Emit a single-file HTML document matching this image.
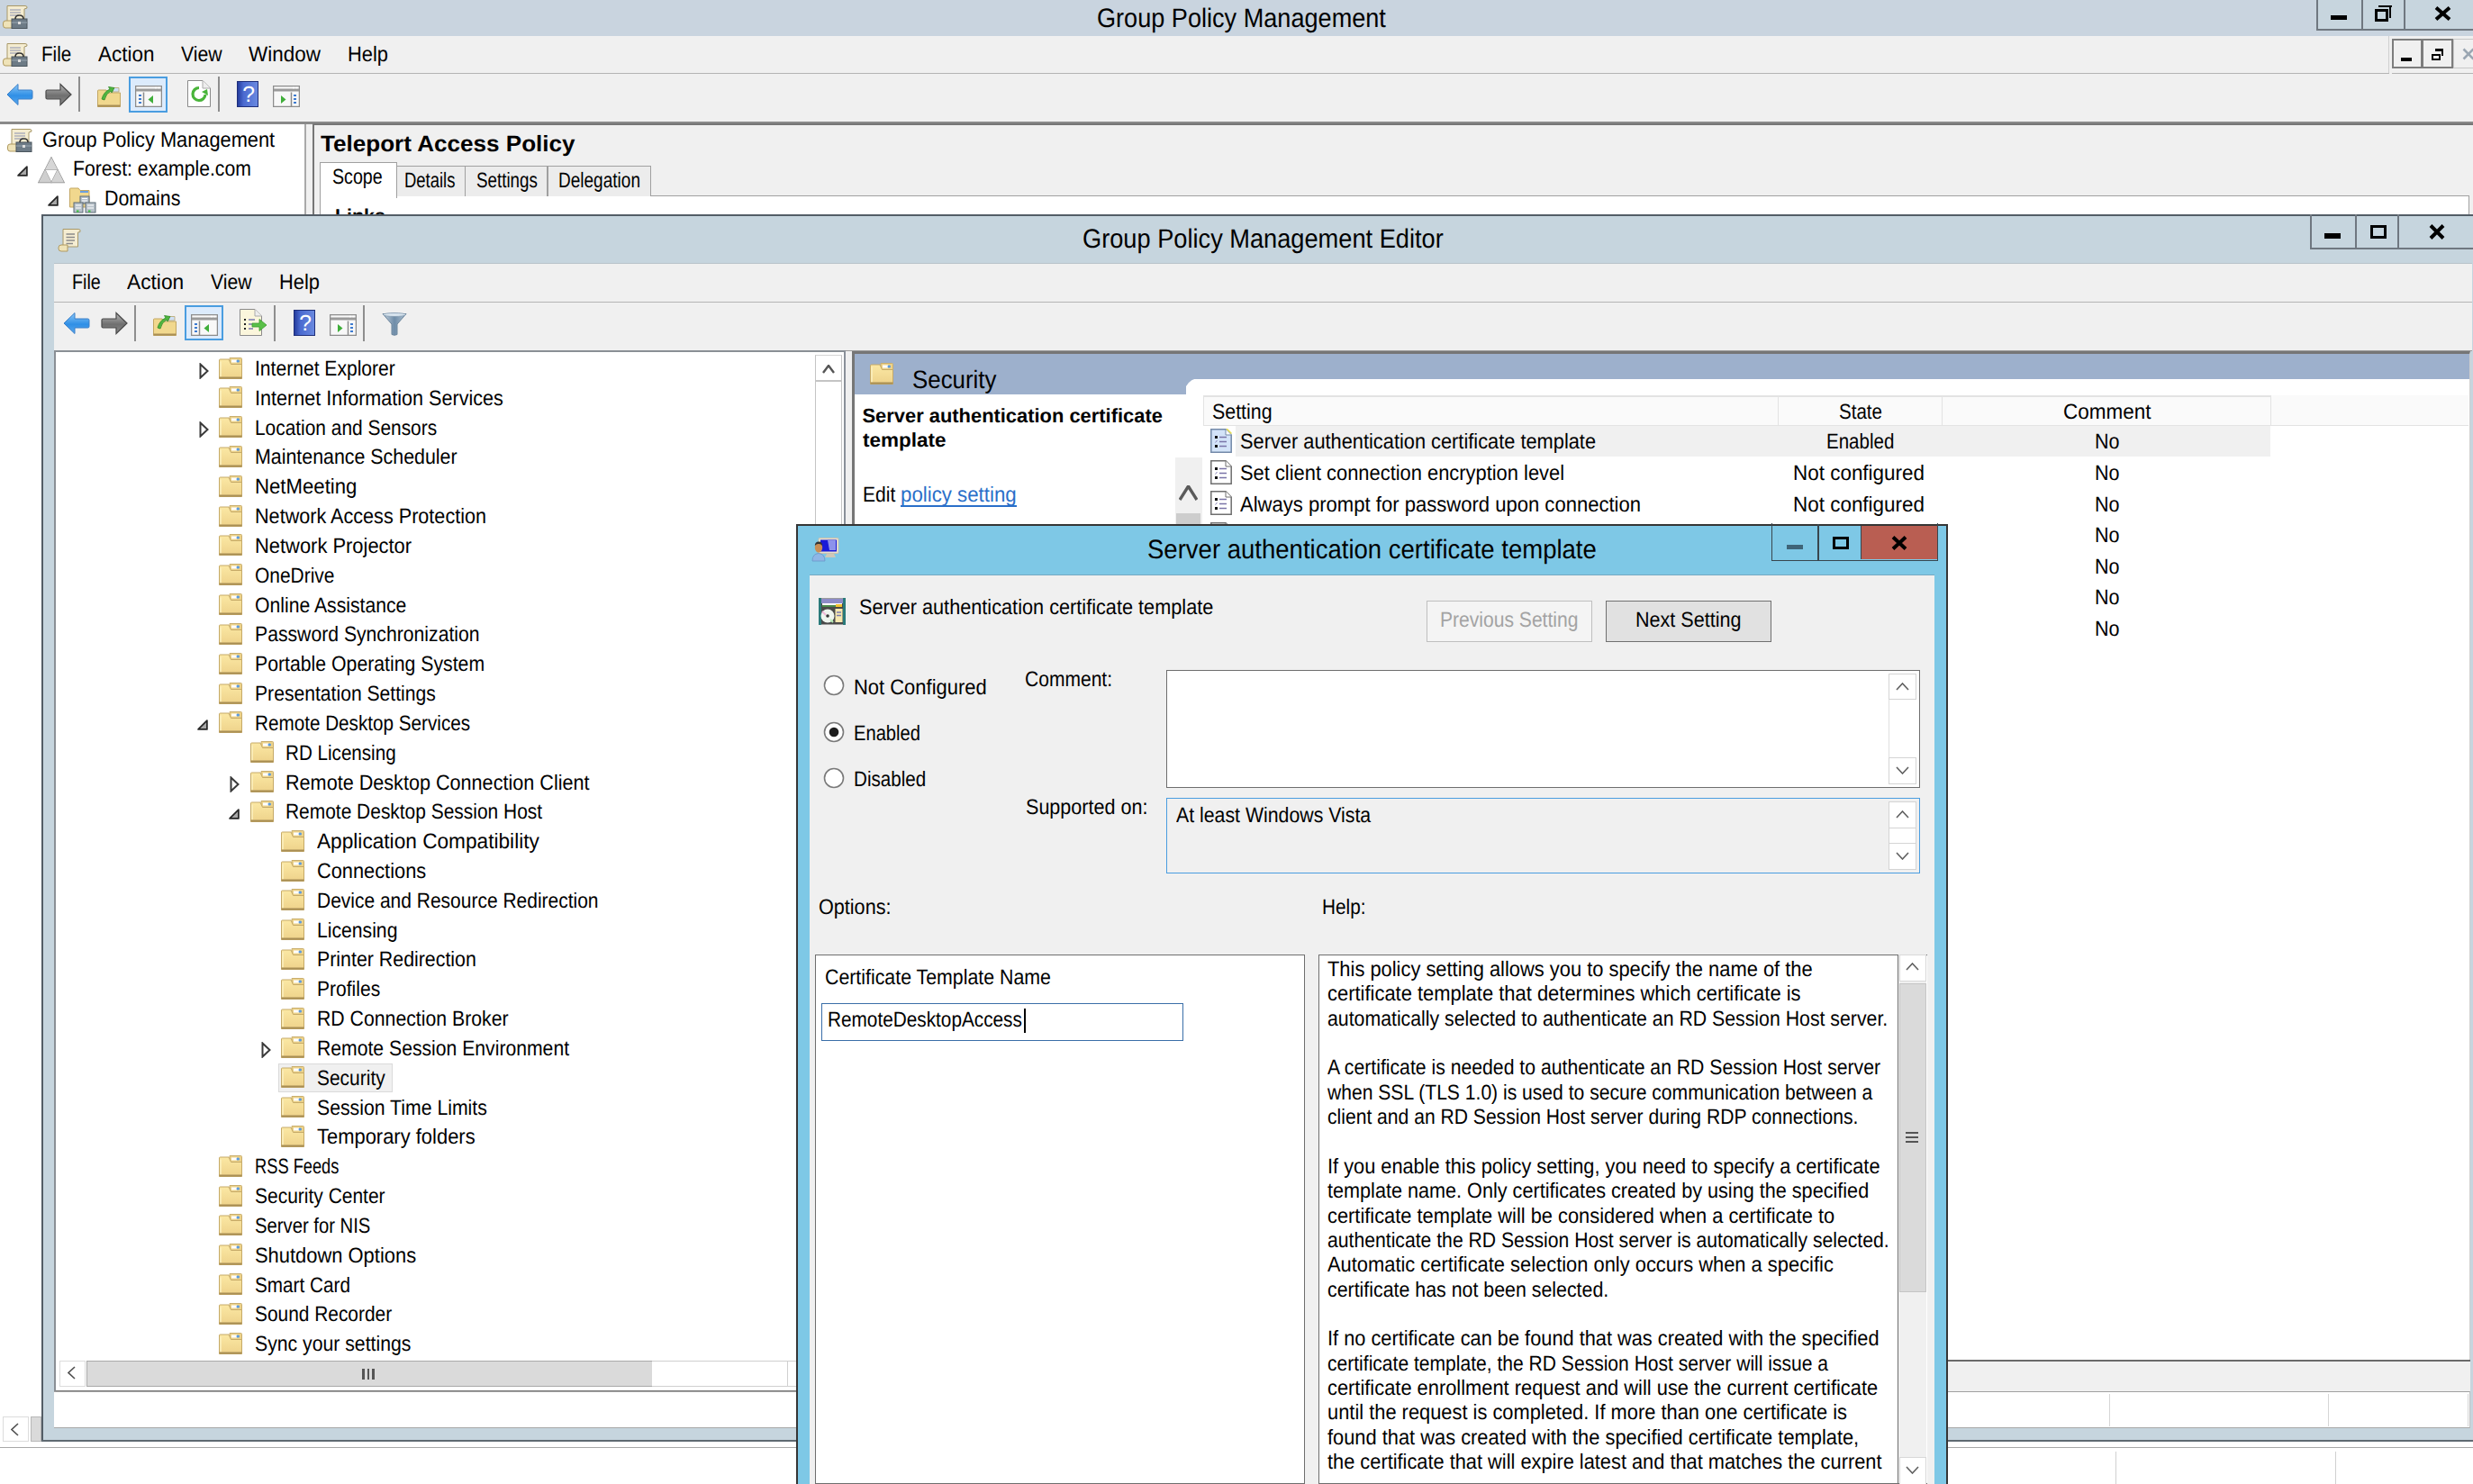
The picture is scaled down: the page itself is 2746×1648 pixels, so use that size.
<!DOCTYPE html><html><head><meta charset="utf-8"><style>
*{margin:0;padding:0;box-sizing:border-box}
html,body{width:2746px;height:1648px;overflow:hidden;background:#f0f0f0}
body{position:relative;font-family:"Liberation Sans",sans-serif;color:#000;text-rendering:geometricPrecision}
body>div,body>svg{position:absolute}
.t{white-space:pre;line-height:1}
</style></head><body>
<svg style="left:0;top:0" width="0" height="0"><defs><linearGradient id="fgrad" x1="0" y1="0" x2="0" y2="1"><stop offset="0" stop-color="#fbe8a4"/><stop offset="1" stop-color="#eed28a"/></linearGradient></defs></svg>
<div style="left:0px;top:0px;width:2746px;height:40px;background:#c9d4df"></div>
<svg style="left:2px;top:5px" width="30" height="28" viewBox="0 0 30 28"><path d="M6 1.5H26Q28.5 1.5 28 4L25 5V20H6Z" fill="#f4ecd0" stroke="#a89868"/><path d="M9 6H21M9 9H21M9 12H19" stroke="#8a8fb0" stroke-width="1.2"/><path d="M1.5 21Q1.5 18 4 18H12V26H4Q1.5 26 1.5 23Z" fill="#efe3b8" stroke="#b09a60"/><rect x="11" y="16" width="17" height="10.5" fill="#6d7b86" stroke="#4a555d"/><path d="M15 16Q15 12 19.5 12Q24 12 24 16" fill="none" stroke="#333" stroke-width="1.6"/><path d="M11 20H28" stroke="#9aa8b2" stroke-width="1"/><rect x="18" y="19" width="3" height="3" fill="#ddd"/></svg>
<div class="t" style="top:6px;font-size:29.620px;transform:scaleX(0.9154);left:1218.00px;transform-origin:0 0;">Group Policy Management</div>
<div style="left:2572px;top:-2px;width:176px;height:36px;background:#c7d5de;border:2px solid #6f7780;border-top:none"></div>
<div style="left:2622px;top:0px;width:2px;height:34px;background:#6f7780"></div>
<div style="left:2669px;top:0px;width:2px;height:34px;background:#6f7780"></div>
<div style="left:2588px;top:16.5px;width:18px;height:5.5px;background:#000"></div>
<div style="left:2637px;top:9.5px;width:15px;height:14.5px;border:3.6px solid #000"></div>
<div style="left:2641px;top:5.5px;width:14.5px;height:2.8px;background:#000"></div>
<div style="left:2652.5px;top:5.5px;width:2.8px;height:14.5px;background:#000"></div>
<svg style="left:2703px;top:7px" width="19" height="16" viewBox="0 0 19 16"><path d="M2 1.5L17 14.5M17 1.5L2 14.5" stroke="#000" stroke-width="4"/></svg>
<div style="left:0px;top:40px;width:2746px;height:41px;background:#f0f0f0"></div>
<div style="left:0px;top:80.5px;width:2653px;height:1.5px;background:#b4b4b4"></div>
<div style="left:2656px;top:80.5px;width:90px;height:1.5px;background:#b4b4b4"></div>
<div style="left:2652px;top:40px;width:1px;height:41px;background:#cfcfcf"></div>
<svg style="left:2px;top:47px" width="30" height="28" viewBox="0 0 30 28"><path d="M6 1.5H26Q28.5 1.5 28 4L25 5V20H6Z" fill="#f4ecd0" stroke="#a89868"/><path d="M9 6H21M9 9H21M9 12H19" stroke="#8a8fb0" stroke-width="1.2"/><path d="M1.5 21Q1.5 18 4 18H12V26H4Q1.5 26 1.5 23Z" fill="#efe3b8" stroke="#b09a60"/><rect x="11" y="16" width="17" height="10.5" fill="#6d7b86" stroke="#4a555d"/><path d="M15 16Q15 12 19.5 12Q24 12 24 16" fill="none" stroke="#333" stroke-width="1.6"/><path d="M11 20H28" stroke="#9aa8b2" stroke-width="1"/><rect x="18" y="19" width="3" height="3" fill="#ddd"/></svg>
<div class="t" style="top:50px;font-size:23.653px;transform:scaleX(0.8726);left:46.25px;transform-origin:0 0;">File</div>
<div class="t" style="top:50px;font-size:23.653px;transform:scaleX(0.9508);left:108.75px;transform-origin:0 0;">Action</div>
<div class="t" style="top:50px;font-size:23.653px;transform:scaleX(0.8988);left:201.25px;transform-origin:0 0;">View</div>
<div class="t" style="top:50px;font-size:23.653px;transform:scaleX(0.9503);left:276.25px;transform-origin:0 0;">Window</div>
<div class="t" style="top:50px;font-size:23.653px;transform:scaleX(0.9249);left:386.25px;transform-origin:0 0;">Help</div>
<div style="left:2656px;top:43px;width:34px;height:33px;background:#f0f0f0;border:2px solid #7d7d7d"></div>
<div style="left:2689px;top:43px;width:35px;height:33px;background:#f0f0f0;border:2px solid #7d7d7d"></div>
<div style="left:2724px;top:43px;width:30px;height:33px;background:#f0f0f0;border:1.5px solid #c8c8c8"></div>
<div style="left:2666px;top:64px;width:11.5px;height:3.5px;background:#000"></div>
<div style="left:2700px;top:59.5px;width:10px;height:7.5px;border:2.5px solid #000"></div>
<div style="left:2703.5px;top:54px;width:9.5px;height:2.5px;background:#000"></div>
<div style="left:2710.5px;top:54px;width:2.5px;height:8px;background:#000"></div>
<svg style="left:2734px;top:53px" width="14" height="14" viewBox="0 0 14 14"><path d="M1.5 1.5L12.5 12.5M12.5 1.5L1.5 12.5" stroke="#9aa6b2" stroke-width="2.6"/></svg>
<div style="left:0px;top:82px;width:2746px;height:54px;background:#f0f0f0"></div>
<svg style="left:7px;top:92px" width="30" height="26" viewBox="0 0 30 26"><defs><linearGradient id="ba" x1="0" y1="0" x2="0" y2="1"><stop offset="0" stop-color="#8cc8f7"/><stop offset=".55" stop-color="#2f8fe6"/><stop offset="1" stop-color="#5aa9ee"/></linearGradient></defs><path d="M1 13L13 1.5V8H27.5Q29 8 29 9.5V16.5Q29 18 27.5 18H13V24.5Z" fill="url(#ba)" stroke="#3a7fc8" stroke-width="1"/></svg>
<svg style="left:49.5px;top:92px" width="30" height="26" viewBox="0 0 30 26"><defs><linearGradient id="fa" x1="0" y1="0" x2="0" y2="1"><stop offset="0" stop-color="#b9b9b9"/><stop offset=".55" stop-color="#6f6f6f"/><stop offset="1" stop-color="#8a8a8a"/></linearGradient></defs><path d="M29 13L17 1.5V8H2.5Q1 8 1 9.5V16.5Q1 18 2.5 18H17V24.5Z" fill="url(#fa)" stroke="#4a4a4a" stroke-width="1.2"/></svg>
<div style="left:86.5px;top:85px;width:2px;height:39px;background:#8e8e8e"></div>
<svg style="left:108px;top:92.5px" width="26" height="26" viewBox="0 0 26 26"><path d="M.5 8Q.5 7 1.5 7H10L12 10H25.5V25.5H.5Z" fill="#f1d88e" stroke="#c3a763"/><path d="M.5 24.5H25.5" stroke="#a98f55" stroke-width="2"/><path d="M17 4.5H24V9H17Z" fill="#cfe0f5" stroke="#b9a36a" stroke-width=".8"/><path d="M5 17Q7 9 14 6L12.5 3.5L19 4.5L16 10L15 8Q9.5 11 8 18Z" fill="#4fb53f" stroke="#2e8a26" stroke-width=".8"/></svg>
<div style="left:143px;top:85px;width:42.5px;height:39.5px;background:#dcebfc;border:2px solid #4a9de0"></div>
<svg style="left:150px;top:95px" width="30" height="24" viewBox="0 0 30 24"><rect x=".5" y=".5" width="29" height="23" fill="#f8f8f8" stroke="#8c8c8c" stroke-width="1.5"/><path d="M1 5H29" stroke="#9a9a9a" stroke-width="3"/><path d="M22 2.5H24M25.5 2.5H27.5" stroke="#fff" stroke-width="1.5"/><path d="M9.5 7.5V23" stroke="#8c8c8c" stroke-width="1.5"/><path d="M4 11H7M4 15H7M4 19H7" stroke="#3d7bd0" stroke-width="2"/><path d="M20 11L14.5 15.5L20 20Z" fill="#3fae3a"/></svg>
<svg style="left:207.5px;top:89px" width="26" height="30" viewBox="0 0 26 30"><path d="M.5 .5H17L25.5 9V29.5H.5Z" fill="#fff" stroke="#8a8a8a"/><path d="M17 .5V9H25.5" fill="#eee" stroke="#aaa"/><path d="M13 8.5A7 7 0 1 0 20 16" fill="none" stroke="#49b43a" stroke-width="3.2"/><path d="M16 13L23 17L22 10Z" fill="#49b43a"/></svg>
<div style="left:241.5px;top:85px;width:2px;height:39px;background:#8e8e8e"></div>
<svg style="left:263px;top:89.5px" width="24" height="29" viewBox="0 0 24 29"><defs><linearGradient id="hg" x1="0" y1="0" x2="1" y2="0"><stop offset="0" stop-color="#22399a"/><stop offset=".3" stop-color="#4a6ad0"/><stop offset="1" stop-color="#6b8ae0"/></linearGradient></defs><rect x=".5" y=".5" width="23" height="28" fill="url(#hg)" stroke="#1f2f7a"/><text x="13.0" y="23.200000000000003" font-family="Liberation Sans" font-size="24.65" fill="#fff" text-anchor="middle">?</text></svg>
<svg style="left:303px;top:95px" width="30" height="24" viewBox="0 0 30 24"><rect x=".5" y=".5" width="29" height="23" fill="#f8f8f8" stroke="#8c8c8c" stroke-width="1.5"/><path d="M1 5H29" stroke="#9a9a9a" stroke-width="3"/><path d="M22 2.5H24M25.5 2.5H27.5" stroke="#fff" stroke-width="1.5"/><path d="M20.5 7.5V23" stroke="#8c8c8c" stroke-width="1.5"/><path d="M23 11H26M23 15H26M23 19H26" stroke="#3d7bd0" stroke-width="2"/><path d="M9 11L14.5 15.5L9 20Z" fill="#3fae3a"/></svg>
<div style="left:0px;top:135px;width:2746px;height:3px;background:#8a8a8a"></div>
<div style="left:0px;top:138px;width:338px;height:1463px;background:#fff"></div>
<div style="left:338px;top:138px;width:1.5px;height:100px;background:#a9a9a9"></div>
<svg style="left:7px;top:142px" width="30" height="28" viewBox="0 0 30 28"><path d="M6 1.5H26Q28.5 1.5 28 4L25 5V20H6Z" fill="#f4ecd0" stroke="#a89868"/><path d="M9 6H21M9 9H21M9 12H19" stroke="#8a8fb0" stroke-width="1.2"/><path d="M1.5 21Q1.5 18 4 18H12V26H4Q1.5 26 1.5 23Z" fill="#efe3b8" stroke="#b09a60"/><rect x="11" y="16" width="17" height="10.5" fill="#6d7b86" stroke="#4a555d"/><path d="M15 16Q15 12 19.5 12Q24 12 24 16" fill="none" stroke="#333" stroke-width="1.6"/><path d="M11 20H28" stroke="#9aa8b2" stroke-width="1"/><rect x="18" y="19" width="3" height="3" fill="#ddd"/></svg>
<div class="t" style="top:145px;font-size:23.653px;transform:scaleX(0.9224);left:46.70px;transform-origin:0 0;">Group Policy Management</div>
<svg style="left:18.5px;top:183.5px" width="12" height="12" viewBox="0 0 12 12"><path d="M10.9 1.1V10.9H1.1Z" fill="#a8a8a8" stroke="#262626" stroke-width="1.7" stroke-linejoin="round"/></svg>
<svg style="left:42px;top:173.5px" width="30" height="30" viewBox="0 0 30 30"><path d="M15 1L29 28.5H1Z" fill="#f4f4f4" stroke="#8a8a8a" stroke-width="1.3"/><path d="M8 14.5H22L15 28.5Z" fill="#fff" stroke="#9a9a9a" stroke-width="1.1"/><path d="M15 1L22 14.5H8Z" fill="#d6d6d6"/><path d="M1 28.5L8 14.5L15 28.5Z" fill="#cfcfcf"/><path d="M15 28.5L22 14.5L29 28.5Z" fill="#d4d4d4"/></svg>
<div class="t" style="top:177px;font-size:23.653px;transform:scaleX(0.8966);left:81.00px;transform-origin:0 0;">Forest: example.com</div>
<svg style="left:53.0px;top:217.0px" width="12" height="12" viewBox="0 0 12 12"><path d="M10.9 1.1V10.9H1.1Z" fill="#a8a8a8" stroke="#262626" stroke-width="1.7" stroke-linejoin="round"/></svg>
<svg style="left:77px;top:208px" width="30" height="29" viewBox="0 0 30 29"><path d="M.5 2Q.5 1 1.5 1H10L12 3.5H22V22H.5Z" fill="#f1d88e" stroke="#c3a763"/><rect x="12" y="4" width="9" height="2" fill="#6a9fe0"/><rect x="12" y="10" width="10" height="8" fill="#b8c2ca" stroke="#5d6a74"/><rect x="5" y="17" width="10" height="11" fill="#b8c2ca" stroke="#5d6a74"/><rect x="18" y="17" width="11" height="11" fill="#b8c2ca" stroke="#5d6a74"/><path d="M7 20H13M7 23H13M20 20H27M20 23H27M14 12.5H20M14 15H20" stroke="#fff" stroke-width="1.2"/><rect x="8" y="25.5" width="2.5" height="2" fill="#3cc43c"/><rect x="21" y="25.5" width="2.5" height="2" fill="#3cc43c"/></svg>
<div class="t" style="top:210px;font-size:23.653px;transform:scaleX(0.9053);left:116.20px;transform-origin:0 0;">Domains</div>
<div style="left:339.5px;top:138px;width:7px;height:100px;background:#f0f0f0"></div>
<div style="left:346.5px;top:136.5px;width:2399.5px;height:102px;background:#f0f0f0;border-left:2.5px solid #767676;border-top:2.5px solid #767676"></div>
<div class="t" style="top:148px;font-size:25.000px;font-weight:bold;transform:scaleX(1.0430);left:356.00px;transform-origin:0 0;">Teleport Access Policy</div>
<div style="left:355px;top:217px;width:2387px;height:30px;background:#fff;border:1.5px solid #a0a0a0"></div>
<div style="left:440px;top:183.5px;width:76.5px;height:34.5px;background:#ececec;border:1.5px solid #a0a0a0;border-bottom:none"></div>
<div style="left:516px;top:183.5px;width:92px;height:34.5px;background:#ececec;border:1.5px solid #a0a0a0;border-bottom:none"></div>
<div style="left:607.5px;top:183.5px;width:115.5px;height:34.5px;background:#ececec;border:1.5px solid #a0a0a0;border-bottom:none"></div>
<div style="left:355px;top:179.5px;width:85.5px;height:40px;background:#fff;border:1.5px solid #a0a0a0;border-bottom:none"></div>
<div class="t" style="top:186px;font-size:23.653px;transform:scaleX(0.8306);left:369.00px;transform-origin:0 0;">Scope</div>
<div class="t" style="top:190px;font-size:23.653px;transform:scaleX(0.7814);left:448.50px;transform-origin:0 0;">Details</div>
<div class="t" style="top:190px;font-size:23.653px;transform:scaleX(0.7945);left:528.60px;transform-origin:0 0;">Settings</div>
<div class="t" style="top:190px;font-size:23.653px;transform:scaleX(0.8047);left:620.00px;transform-origin:0 0;">Delegation</div>
<div class="t" style="top:230px;font-size:21.400px;font-weight:bold;left:372.00px;transform-origin:0 0;">Links</div>
<div style="left:0px;top:1601px;width:2746px;height:47px;background:#fff"></div>
<div style="left:0px;top:1606.5px;width:2746px;height:1.5px;background:#a8a8a8"></div>
<div style="left:2349px;top:1612px;width:1px;height:36px;background:#d0d0d0"></div>
<div style="left:2592.5px;top:1612px;width:1px;height:36px;background:#d0d0d0"></div>
<div style="left:0px;top:1571px;width:46px;height:31px;background:#fff"></div>
<div style="left:2.5px;top:1573px;width:29px;height:28px;background:#fff;border:1px solid #dcdcdc"></div>
<svg style="left:12px;top:1580px" width="9" height="15" viewBox="0 0 9 15"><path d="M8 1L1 7.5L8 14" fill="none" stroke="#505050" stroke-width="1.6"/></svg>
<div style="left:34px;top:1573px;width:12px;height:28px;background:#dadada;border:1px solid #b8b8b8"></div>
<div style="left:46px;top:238px;width:2704px;height:1363px;background:#c6d5de;border:2px solid #535d66"></div>
<svg style="left:63px;top:252px" width="28" height="28" viewBox="0 0 28 28"><path d="M7 2.5H24Q27 2.5 26 5.5L23.5 6V22H7Z" fill="#f5edd2" stroke="#a89868"/><path d="M10.5 8H20M10.5 11.5H20M10.5 15H20M10.5 18.5H18" stroke="#8a8a8a" stroke-width="1.3"/><path d="M2 23Q2 20 5 20H12V27H5Q2 27 2 24Z" fill="#efe3b8" stroke="#b09a60"/></svg>
<div class="t" style="top:251px;font-size:29.620px;transform:scaleX(0.9188);left:1202.30px;transform-origin:0 0;">Group Policy Management Editor</div>
<div style="left:2565px;top:238px;width:185px;height:39px;border:2px solid #6f7780;border-top:none"></div>
<div style="left:2615px;top:238px;width:2px;height:38px;background:#6f7780"></div>
<div style="left:2662px;top:238px;width:2px;height:38px;background:#6f7780"></div>
<div style="left:2580.5px;top:258.5px;width:18px;height:6px;background:#000"></div>
<div style="left:2631.5px;top:250px;width:18.5px;height:14.5px;border:3.8px solid #000"></div>
<svg style="left:2696.5px;top:249px" width="18" height="17" viewBox="0 0 18 17"><path d="M2 1.5L16 15.5M16 1.5L2 15.5" stroke="#000" stroke-width="4"/></svg>
<div style="left:60px;top:292px;width:2684.5px;height:43px;background:#f0f0f0;border-top:1.5px solid #b9c3ca"></div>
<div class="t" style="top:303px;font-size:23.653px;transform:scaleX(0.8332);left:79.50px;transform-origin:0 0;">File</div>
<div class="t" style="top:303px;font-size:23.653px;transform:scaleX(0.9622);left:141.25px;transform-origin:0 0;">Action</div>
<div class="t" style="top:303px;font-size:23.653px;transform:scaleX(0.8988);left:233.75px;transform-origin:0 0;">View</div>
<div class="t" style="top:303px;font-size:23.653px;transform:scaleX(0.9249);left:309.50px;transform-origin:0 0;">Help</div>
<div style="left:60px;top:334.5px;width:2684.5px;height:1.5px;background:#b4b4b4"></div>
<div style="left:60px;top:336px;width:2684.5px;height:53px;background:#f0f0f0"></div>
<svg style="left:69.5px;top:345.5px" width="30" height="26" viewBox="0 0 30 26"><defs><linearGradient id="ba" x1="0" y1="0" x2="0" y2="1"><stop offset="0" stop-color="#8cc8f7"/><stop offset=".55" stop-color="#2f8fe6"/><stop offset="1" stop-color="#5aa9ee"/></linearGradient></defs><path d="M1 13L13 1.5V8H27.5Q29 8 29 9.5V16.5Q29 18 27.5 18H13V24.5Z" fill="url(#ba)" stroke="#3a7fc8" stroke-width="1"/></svg>
<svg style="left:111.5px;top:345.5px" width="30" height="26" viewBox="0 0 30 26"><defs><linearGradient id="fa" x1="0" y1="0" x2="0" y2="1"><stop offset="0" stop-color="#b9b9b9"/><stop offset=".55" stop-color="#6f6f6f"/><stop offset="1" stop-color="#8a8a8a"/></linearGradient></defs><path d="M29 13L17 1.5V8H2.5Q1 8 1 9.5V16.5Q1 18 2.5 18H17V24.5Z" fill="url(#fa)" stroke="#4a4a4a" stroke-width="1.2"/></svg>
<div style="left:148.5px;top:338.5px;width:2px;height:40px;background:#8e8e8e"></div>
<svg style="left:170px;top:346.5px" width="26" height="26" viewBox="0 0 26 26"><path d="M.5 8Q.5 7 1.5 7H10L12 10H25.5V25.5H.5Z" fill="#f1d88e" stroke="#c3a763"/><path d="M.5 24.5H25.5" stroke="#a98f55" stroke-width="2"/><path d="M17 4.5H24V9H17Z" fill="#cfe0f5" stroke="#b9a36a" stroke-width=".8"/><path d="M5 17Q7 9 14 6L12.5 3.5L19 4.5L16 10L15 8Q9.5 11 8 18Z" fill="#4fb53f" stroke="#2e8a26" stroke-width=".8"/></svg>
<div style="left:205px;top:338.5px;width:42.7px;height:39.5px;background:#dcebfc;border:2px solid #4a9de0"></div>
<svg style="left:211.5px;top:348.5px" width="30" height="24" viewBox="0 0 30 24"><rect x=".5" y=".5" width="29" height="23" fill="#f8f8f8" stroke="#8c8c8c" stroke-width="1.5"/><path d="M1 5H29" stroke="#9a9a9a" stroke-width="3"/><path d="M22 2.5H24M25.5 2.5H27.5" stroke="#fff" stroke-width="1.5"/><path d="M9.5 7.5V23" stroke="#8c8c8c" stroke-width="1.5"/><path d="M4 11H7M4 15H7M4 19H7" stroke="#3d7bd0" stroke-width="2"/><path d="M20 11L14.5 15.5L20 20Z" fill="#3fae3a"/></svg>
<svg style="left:266px;top:343px" width="31" height="30" viewBox="0 0 31 30"><path d="M.5 .5H17L24.5 8V29.5H.5Z" fill="#fbf6dc" stroke="#8a8a8a"/><path d="M17 .5V8H24.5" fill="#eee" stroke="#aaa"/><path d="M5 12H7M5 17H7M5 22H7" stroke="#222" stroke-width="2"/><path d="M10 12H17M10 17H15M10 22H15" stroke="#7a7ab0" stroke-width="1.6"/><path d="M14 16H22V11.5L30 18L22 24.5V20H14Z" fill="#59c048" stroke="#3a9a2e" stroke-width=".8"/></svg>
<div style="left:304.0px;top:338.5px;width:2px;height:40px;background:#8e8e8e"></div>
<svg style="left:325.5px;top:343.5px" width="24" height="29" viewBox="0 0 24 29"><defs><linearGradient id="hg" x1="0" y1="0" x2="1" y2="0"><stop offset="0" stop-color="#22399a"/><stop offset=".3" stop-color="#4a6ad0"/><stop offset="1" stop-color="#6b8ae0"/></linearGradient></defs><rect x=".5" y=".5" width="23" height="28" fill="url(#hg)" stroke="#1f2f7a"/><text x="13.0" y="23.200000000000003" font-family="Liberation Sans" font-size="24.65" fill="#fff" text-anchor="middle">?</text></svg>
<svg style="left:365.5px;top:348.5px" width="30" height="24" viewBox="0 0 30 24"><rect x=".5" y=".5" width="29" height="23" fill="#f8f8f8" stroke="#8c8c8c" stroke-width="1.5"/><path d="M1 5H29" stroke="#9a9a9a" stroke-width="3"/><path d="M22 2.5H24M25.5 2.5H27.5" stroke="#fff" stroke-width="1.5"/><path d="M20.5 7.5V23" stroke="#8c8c8c" stroke-width="1.5"/><path d="M23 11H26M23 15H26M23 19H26" stroke="#3d7bd0" stroke-width="2"/><path d="M9 11L14.5 15.5L9 20Z" fill="#3fae3a"/></svg>
<div style="left:402.5px;top:338.5px;width:2px;height:40px;background:#8e8e8e"></div>
<svg style="left:424px;top:346.5px" width="28" height="26" viewBox="0 0 28 26"><defs><linearGradient id="flg" x1="0" y1="0" x2="1" y2="0"><stop offset="0" stop-color="#c5d2de"/><stop offset=".5" stop-color="#6e8ca8"/><stop offset="1" stop-color="#b0c2d2"/></linearGradient></defs><path d="M1 1.5H27L17 13V24.5Q14 26 11 24.5V13Z" fill="url(#flg)" stroke="#6b859c" stroke-width="1"/><ellipse cx="14" cy="2.5" rx="12.5" ry="2" fill="#d8e4ee" stroke="#7d96ac" stroke-width=".8"/></svg>
<div style="left:60px;top:388.5px;width:2684.5px;height:1.5px;background:#9a9a9a"></div>
<div style="left:60px;top:389px;width:879px;height:1158px;background:#fff;border:2px solid #8a8f95;border-right:2.5px solid #8a9099;border-bottom:3px solid #7b7b7b"></div>
<svg style="left:220.5px;top:402.5px" width="11" height="18" viewBox="0 0 11 18"><path d="M1.5 1.5L9.5 9L1.5 16.5Z" fill="none" stroke="#3a3a3a" stroke-width="2" stroke-linejoin="miter"/></svg>
<svg style="left:243.0px;top:396.5px" width="26" height="24" viewBox="0 0 26 24"><path d="M12 .5H24.5Q25.5 .5 25.5 1.5V9H12Z" fill="#ecd28a" stroke="#c9ae6e"/><rect x="14" y="2.5" width="6" height="3" fill="#fff"/><rect x="19.5" y="2.5" width="3.5" height="3" rx="1.5" fill="#5b9be0"/><path d="M.5 3Q.5 2 1.5 2H11L13.5 7.5H25.5V23.5H.5Z" fill="url(#fgrad)" stroke="#c6aa68"/><path d="M2 4.5V21.5" stroke="#fbf0c0" stroke-width="1.5"/><path d="M.5 22.5H25.5" stroke="#a98f55" stroke-width="2"/></svg>
<div class="t" style="top:399px;font-size:23.653px;transform:scaleX(0.8918);left:282.80px;transform-origin:0 0;">Internet Explorer</div>
<svg style="left:243.0px;top:429.324px" width="26" height="24" viewBox="0 0 26 24"><path d="M12 .5H24.5Q25.5 .5 25.5 1.5V9H12Z" fill="#ecd28a" stroke="#c9ae6e"/><rect x="14" y="2.5" width="6" height="3" fill="#fff"/><rect x="19.5" y="2.5" width="3.5" height="3" rx="1.5" fill="#5b9be0"/><path d="M.5 3Q.5 2 1.5 2H11L13.5 7.5H25.5V23.5H.5Z" fill="url(#fgrad)" stroke="#c6aa68"/><path d="M2 4.5V21.5" stroke="#fbf0c0" stroke-width="1.5"/><path d="M.5 22.5H25.5" stroke="#a98f55" stroke-width="2"/></svg>
<div class="t" style="top:432px;font-size:23.653px;transform:scaleX(0.9126);left:282.80px;transform-origin:0 0;">Internet Information Services</div>
<svg style="left:220.5px;top:468.148px" width="11" height="18" viewBox="0 0 11 18"><path d="M1.5 1.5L9.5 9L1.5 16.5Z" fill="none" stroke="#3a3a3a" stroke-width="2" stroke-linejoin="miter"/></svg>
<svg style="left:243.0px;top:462.148px" width="26" height="24" viewBox="0 0 26 24"><path d="M12 .5H24.5Q25.5 .5 25.5 1.5V9H12Z" fill="#ecd28a" stroke="#c9ae6e"/><rect x="14" y="2.5" width="6" height="3" fill="#fff"/><rect x="19.5" y="2.5" width="3.5" height="3" rx="1.5" fill="#5b9be0"/><path d="M.5 3Q.5 2 1.5 2H11L13.5 7.5H25.5V23.5H.5Z" fill="url(#fgrad)" stroke="#c6aa68"/><path d="M2 4.5V21.5" stroke="#fbf0c0" stroke-width="1.5"/><path d="M.5 22.5H25.5" stroke="#a98f55" stroke-width="2"/></svg>
<div class="t" style="top:465px;font-size:23.653px;transform:scaleX(0.8838);left:282.80px;transform-origin:0 0;">Location and Sensors</div>
<svg style="left:243.0px;top:494.972px" width="26" height="24" viewBox="0 0 26 24"><path d="M12 .5H24.5Q25.5 .5 25.5 1.5V9H12Z" fill="#ecd28a" stroke="#c9ae6e"/><rect x="14" y="2.5" width="6" height="3" fill="#fff"/><rect x="19.5" y="2.5" width="3.5" height="3" rx="1.5" fill="#5b9be0"/><path d="M.5 3Q.5 2 1.5 2H11L13.5 7.5H25.5V23.5H.5Z" fill="url(#fgrad)" stroke="#c6aa68"/><path d="M2 4.5V21.5" stroke="#fbf0c0" stroke-width="1.5"/><path d="M.5 22.5H25.5" stroke="#a98f55" stroke-width="2"/></svg>
<div class="t" style="top:497px;font-size:23.653px;transform:scaleX(0.9041);left:282.80px;transform-origin:0 0;">Maintenance Scheduler</div>
<svg style="left:243.0px;top:527.796px" width="26" height="24" viewBox="0 0 26 24"><path d="M12 .5H24.5Q25.5 .5 25.5 1.5V9H12Z" fill="#ecd28a" stroke="#c9ae6e"/><rect x="14" y="2.5" width="6" height="3" fill="#fff"/><rect x="19.5" y="2.5" width="3.5" height="3" rx="1.5" fill="#5b9be0"/><path d="M.5 3Q.5 2 1.5 2H11L13.5 7.5H25.5V23.5H.5Z" fill="url(#fgrad)" stroke="#c6aa68"/><path d="M2 4.5V21.5" stroke="#fbf0c0" stroke-width="1.5"/><path d="M.5 22.5H25.5" stroke="#a98f55" stroke-width="2"/></svg>
<div class="t" style="top:530px;font-size:23.653px;transform:scaleX(0.9379);left:282.80px;transform-origin:0 0;">NetMeeting</div>
<svg style="left:243.0px;top:560.62px" width="26" height="24" viewBox="0 0 26 24"><path d="M12 .5H24.5Q25.5 .5 25.5 1.5V9H12Z" fill="#ecd28a" stroke="#c9ae6e"/><rect x="14" y="2.5" width="6" height="3" fill="#fff"/><rect x="19.5" y="2.5" width="3.5" height="3" rx="1.5" fill="#5b9be0"/><path d="M.5 3Q.5 2 1.5 2H11L13.5 7.5H25.5V23.5H.5Z" fill="url(#fgrad)" stroke="#c6aa68"/><path d="M2 4.5V21.5" stroke="#fbf0c0" stroke-width="1.5"/><path d="M.5 22.5H25.5" stroke="#a98f55" stroke-width="2"/></svg>
<div class="t" style="top:563px;font-size:23.653px;transform:scaleX(0.9142);left:282.80px;transform-origin:0 0;">Network Access Protection</div>
<svg style="left:243.0px;top:593.444px" width="26" height="24" viewBox="0 0 26 24"><path d="M12 .5H24.5Q25.5 .5 25.5 1.5V9H12Z" fill="#ecd28a" stroke="#c9ae6e"/><rect x="14" y="2.5" width="6" height="3" fill="#fff"/><rect x="19.5" y="2.5" width="3.5" height="3" rx="1.5" fill="#5b9be0"/><path d="M.5 3Q.5 2 1.5 2H11L13.5 7.5H25.5V23.5H.5Z" fill="url(#fgrad)" stroke="#c6aa68"/><path d="M2 4.5V21.5" stroke="#fbf0c0" stroke-width="1.5"/><path d="M.5 22.5H25.5" stroke="#a98f55" stroke-width="2"/></svg>
<div class="t" style="top:596px;font-size:23.653px;transform:scaleX(0.9267);left:282.80px;transform-origin:0 0;">Network Projector</div>
<svg style="left:243.0px;top:626.268px" width="26" height="24" viewBox="0 0 26 24"><path d="M12 .5H24.5Q25.5 .5 25.5 1.5V9H12Z" fill="#ecd28a" stroke="#c9ae6e"/><rect x="14" y="2.5" width="6" height="3" fill="#fff"/><rect x="19.5" y="2.5" width="3.5" height="3" rx="1.5" fill="#5b9be0"/><path d="M.5 3Q.5 2 1.5 2H11L13.5 7.5H25.5V23.5H.5Z" fill="url(#fgrad)" stroke="#c6aa68"/><path d="M2 4.5V21.5" stroke="#fbf0c0" stroke-width="1.5"/><path d="M.5 22.5H25.5" stroke="#a98f55" stroke-width="2"/></svg>
<div class="t" style="top:629px;font-size:23.653px;transform:scaleX(0.8853);left:282.80px;transform-origin:0 0;">OneDrive</div>
<svg style="left:243.0px;top:659.092px" width="26" height="24" viewBox="0 0 26 24"><path d="M12 .5H24.5Q25.5 .5 25.5 1.5V9H12Z" fill="#ecd28a" stroke="#c9ae6e"/><rect x="14" y="2.5" width="6" height="3" fill="#fff"/><rect x="19.5" y="2.5" width="3.5" height="3" rx="1.5" fill="#5b9be0"/><path d="M.5 3Q.5 2 1.5 2H11L13.5 7.5H25.5V23.5H.5Z" fill="url(#fgrad)" stroke="#c6aa68"/><path d="M2 4.5V21.5" stroke="#fbf0c0" stroke-width="1.5"/><path d="M.5 22.5H25.5" stroke="#a98f55" stroke-width="2"/></svg>
<div class="t" style="top:662px;font-size:23.653px;transform:scaleX(0.8959);left:282.80px;transform-origin:0 0;">Online Assistance</div>
<svg style="left:243.0px;top:691.9159999999999px" width="26" height="24" viewBox="0 0 26 24"><path d="M12 .5H24.5Q25.5 .5 25.5 1.5V9H12Z" fill="#ecd28a" stroke="#c9ae6e"/><rect x="14" y="2.5" width="6" height="3" fill="#fff"/><rect x="19.5" y="2.5" width="3.5" height="3" rx="1.5" fill="#5b9be0"/><path d="M.5 3Q.5 2 1.5 2H11L13.5 7.5H25.5V23.5H.5Z" fill="url(#fgrad)" stroke="#c6aa68"/><path d="M2 4.5V21.5" stroke="#fbf0c0" stroke-width="1.5"/><path d="M.5 22.5H25.5" stroke="#a98f55" stroke-width="2"/></svg>
<div class="t" style="top:694px;font-size:23.653px;transform:scaleX(0.8959);left:282.80px;transform-origin:0 0;">Password Synchronization</div>
<svg style="left:243.0px;top:724.74px" width="26" height="24" viewBox="0 0 26 24"><path d="M12 .5H24.5Q25.5 .5 25.5 1.5V9H12Z" fill="#ecd28a" stroke="#c9ae6e"/><rect x="14" y="2.5" width="6" height="3" fill="#fff"/><rect x="19.5" y="2.5" width="3.5" height="3" rx="1.5" fill="#5b9be0"/><path d="M.5 3Q.5 2 1.5 2H11L13.5 7.5H25.5V23.5H.5Z" fill="url(#fgrad)" stroke="#c6aa68"/><path d="M2 4.5V21.5" stroke="#fbf0c0" stroke-width="1.5"/><path d="M.5 22.5H25.5" stroke="#a98f55" stroke-width="2"/></svg>
<div class="t" style="top:727px;font-size:23.653px;transform:scaleX(0.8987);left:282.80px;transform-origin:0 0;">Portable Operating System</div>
<svg style="left:243.0px;top:757.564px" width="26" height="24" viewBox="0 0 26 24"><path d="M12 .5H24.5Q25.5 .5 25.5 1.5V9H12Z" fill="#ecd28a" stroke="#c9ae6e"/><rect x="14" y="2.5" width="6" height="3" fill="#fff"/><rect x="19.5" y="2.5" width="3.5" height="3" rx="1.5" fill="#5b9be0"/><path d="M.5 3Q.5 2 1.5 2H11L13.5 7.5H25.5V23.5H.5Z" fill="url(#fgrad)" stroke="#c6aa68"/><path d="M2 4.5V21.5" stroke="#fbf0c0" stroke-width="1.5"/><path d="M.5 22.5H25.5" stroke="#a98f55" stroke-width="2"/></svg>
<div class="t" style="top:760px;font-size:23.653px;transform:scaleX(0.8937);left:282.80px;transform-origin:0 0;">Presentation Settings</div>
<svg style="left:219.0px;top:799.3879999999999px" width="12" height="12" viewBox="0 0 12 12"><path d="M10.9 1.1V10.9H1.1Z" fill="#a8a8a8" stroke="#262626" stroke-width="1.7" stroke-linejoin="round"/></svg>
<svg style="left:243.0px;top:790.3879999999999px" width="26" height="24" viewBox="0 0 26 24"><path d="M12 .5H24.5Q25.5 .5 25.5 1.5V9H12Z" fill="#ecd28a" stroke="#c9ae6e"/><rect x="14" y="2.5" width="6" height="3" fill="#fff"/><rect x="19.5" y="2.5" width="3.5" height="3" rx="1.5" fill="#5b9be0"/><path d="M.5 3Q.5 2 1.5 2H11L13.5 7.5H25.5V23.5H.5Z" fill="url(#fgrad)" stroke="#c6aa68"/><path d="M2 4.5V21.5" stroke="#fbf0c0" stroke-width="1.5"/><path d="M.5 22.5H25.5" stroke="#a98f55" stroke-width="2"/></svg>
<div class="t" style="top:793px;font-size:23.653px;transform:scaleX(0.8748);left:282.80px;transform-origin:0 0;">Remote Desktop Services</div>
<svg style="left:277.5px;top:823.212px" width="26" height="24" viewBox="0 0 26 24"><path d="M12 .5H24.5Q25.5 .5 25.5 1.5V9H12Z" fill="#ecd28a" stroke="#c9ae6e"/><rect x="14" y="2.5" width="6" height="3" fill="#fff"/><rect x="19.5" y="2.5" width="3.5" height="3" rx="1.5" fill="#5b9be0"/><path d="M.5 3Q.5 2 1.5 2H11L13.5 7.5H25.5V23.5H.5Z" fill="url(#fgrad)" stroke="#c6aa68"/><path d="M2 4.5V21.5" stroke="#fbf0c0" stroke-width="1.5"/><path d="M.5 22.5H25.5" stroke="#a98f55" stroke-width="2"/></svg>
<div class="t" style="top:826px;font-size:23.653px;transform:scaleX(0.8723);left:317.30px;transform-origin:0 0;">RD Licensing</div>
<svg style="left:255.0px;top:862.036px" width="11" height="18" viewBox="0 0 11 18"><path d="M1.5 1.5L9.5 9L1.5 16.5Z" fill="none" stroke="#3a3a3a" stroke-width="2" stroke-linejoin="miter"/></svg>
<svg style="left:277.5px;top:856.036px" width="26" height="24" viewBox="0 0 26 24"><path d="M12 .5H24.5Q25.5 .5 25.5 1.5V9H12Z" fill="#ecd28a" stroke="#c9ae6e"/><rect x="14" y="2.5" width="6" height="3" fill="#fff"/><rect x="19.5" y="2.5" width="3.5" height="3" rx="1.5" fill="#5b9be0"/><path d="M.5 3Q.5 2 1.5 2H11L13.5 7.5H25.5V23.5H.5Z" fill="url(#fgrad)" stroke="#c6aa68"/><path d="M2 4.5V21.5" stroke="#fbf0c0" stroke-width="1.5"/><path d="M.5 22.5H25.5" stroke="#a98f55" stroke-width="2"/></svg>
<div class="t" style="top:859px;font-size:23.653px;transform:scaleX(0.9141);left:317.30px;transform-origin:0 0;">Remote Desktop Connection Client</div>
<svg style="left:253.5px;top:897.8599999999999px" width="12" height="12" viewBox="0 0 12 12"><path d="M10.9 1.1V10.9H1.1Z" fill="#a8a8a8" stroke="#262626" stroke-width="1.7" stroke-linejoin="round"/></svg>
<svg style="left:277.5px;top:888.8599999999999px" width="26" height="24" viewBox="0 0 26 24"><path d="M12 .5H24.5Q25.5 .5 25.5 1.5V9H12Z" fill="#ecd28a" stroke="#c9ae6e"/><rect x="14" y="2.5" width="6" height="3" fill="#fff"/><rect x="19.5" y="2.5" width="3.5" height="3" rx="1.5" fill="#5b9be0"/><path d="M.5 3Q.5 2 1.5 2H11L13.5 7.5H25.5V23.5H.5Z" fill="url(#fgrad)" stroke="#c6aa68"/><path d="M2 4.5V21.5" stroke="#fbf0c0" stroke-width="1.5"/><path d="M.5 22.5H25.5" stroke="#a98f55" stroke-width="2"/></svg>
<div class="t" style="top:891px;font-size:23.653px;transform:scaleX(0.8855);left:317.30px;transform-origin:0 0;">Remote Desktop Session Host</div>
<svg style="left:312.0px;top:921.684px" width="26" height="24" viewBox="0 0 26 24"><path d="M12 .5H24.5Q25.5 .5 25.5 1.5V9H12Z" fill="#ecd28a" stroke="#c9ae6e"/><rect x="14" y="2.5" width="6" height="3" fill="#fff"/><rect x="19.5" y="2.5" width="3.5" height="3" rx="1.5" fill="#5b9be0"/><path d="M.5 3Q.5 2 1.5 2H11L13.5 7.5H25.5V23.5H.5Z" fill="url(#fgrad)" stroke="#c6aa68"/><path d="M2 4.5V21.5" stroke="#fbf0c0" stroke-width="1.5"/><path d="M.5 22.5H25.5" stroke="#a98f55" stroke-width="2"/></svg>
<div class="t" style="top:924px;font-size:23.653px;transform:scaleX(0.9584);left:351.80px;transform-origin:0 0;">Application Compatibility</div>
<svg style="left:312.0px;top:954.5079999999999px" width="26" height="24" viewBox="0 0 26 24"><path d="M12 .5H24.5Q25.5 .5 25.5 1.5V9H12Z" fill="#ecd28a" stroke="#c9ae6e"/><rect x="14" y="2.5" width="6" height="3" fill="#fff"/><rect x="19.5" y="2.5" width="3.5" height="3" rx="1.5" fill="#5b9be0"/><path d="M.5 3Q.5 2 1.5 2H11L13.5 7.5H25.5V23.5H.5Z" fill="url(#fgrad)" stroke="#c6aa68"/><path d="M2 4.5V21.5" stroke="#fbf0c0" stroke-width="1.5"/><path d="M.5 22.5H25.5" stroke="#a98f55" stroke-width="2"/></svg>
<div class="t" style="top:957px;font-size:23.653px;transform:scaleX(0.9218);left:351.80px;transform-origin:0 0;">Connections</div>
<svg style="left:312.0px;top:987.332px" width="26" height="24" viewBox="0 0 26 24"><path d="M12 .5H24.5Q25.5 .5 25.5 1.5V9H12Z" fill="#ecd28a" stroke="#c9ae6e"/><rect x="14" y="2.5" width="6" height="3" fill="#fff"/><rect x="19.5" y="2.5" width="3.5" height="3" rx="1.5" fill="#5b9be0"/><path d="M.5 3Q.5 2 1.5 2H11L13.5 7.5H25.5V23.5H.5Z" fill="url(#fgrad)" stroke="#c6aa68"/><path d="M2 4.5V21.5" stroke="#fbf0c0" stroke-width="1.5"/><path d="M.5 22.5H25.5" stroke="#a98f55" stroke-width="2"/></svg>
<div class="t" style="top:990px;font-size:23.653px;transform:scaleX(0.8874);left:351.80px;transform-origin:0 0;">Device and Resource Redirection</div>
<svg style="left:312.0px;top:1020.156px" width="26" height="24" viewBox="0 0 26 24"><path d="M12 .5H24.5Q25.5 .5 25.5 1.5V9H12Z" fill="#ecd28a" stroke="#c9ae6e"/><rect x="14" y="2.5" width="6" height="3" fill="#fff"/><rect x="19.5" y="2.5" width="3.5" height="3" rx="1.5" fill="#5b9be0"/><path d="M.5 3Q.5 2 1.5 2H11L13.5 7.5H25.5V23.5H.5Z" fill="url(#fgrad)" stroke="#c6aa68"/><path d="M2 4.5V21.5" stroke="#fbf0c0" stroke-width="1.5"/><path d="M.5 22.5H25.5" stroke="#a98f55" stroke-width="2"/></svg>
<div class="t" style="top:1023px;font-size:23.653px;transform:scaleX(0.8951);left:351.80px;transform-origin:0 0;">Licensing</div>
<svg style="left:312.0px;top:1052.98px" width="26" height="24" viewBox="0 0 26 24"><path d="M12 .5H24.5Q25.5 .5 25.5 1.5V9H12Z" fill="#ecd28a" stroke="#c9ae6e"/><rect x="14" y="2.5" width="6" height="3" fill="#fff"/><rect x="19.5" y="2.5" width="3.5" height="3" rx="1.5" fill="#5b9be0"/><path d="M.5 3Q.5 2 1.5 2H11L13.5 7.5H25.5V23.5H.5Z" fill="url(#fgrad)" stroke="#c6aa68"/><path d="M2 4.5V21.5" stroke="#fbf0c0" stroke-width="1.5"/><path d="M.5 22.5H25.5" stroke="#a98f55" stroke-width="2"/></svg>
<div class="t" style="top:1055px;font-size:23.653px;transform:scaleX(0.9034);left:351.80px;transform-origin:0 0;">Printer Redirection</div>
<svg style="left:312.0px;top:1085.804px" width="26" height="24" viewBox="0 0 26 24"><path d="M12 .5H24.5Q25.5 .5 25.5 1.5V9H12Z" fill="#ecd28a" stroke="#c9ae6e"/><rect x="14" y="2.5" width="6" height="3" fill="#fff"/><rect x="19.5" y="2.5" width="3.5" height="3" rx="1.5" fill="#5b9be0"/><path d="M.5 3Q.5 2 1.5 2H11L13.5 7.5H25.5V23.5H.5Z" fill="url(#fgrad)" stroke="#c6aa68"/><path d="M2 4.5V21.5" stroke="#fbf0c0" stroke-width="1.5"/><path d="M.5 22.5H25.5" stroke="#a98f55" stroke-width="2"/></svg>
<div class="t" style="top:1088px;font-size:23.653px;transform:scaleX(0.8899);left:351.80px;transform-origin:0 0;">Profiles</div>
<svg style="left:312.0px;top:1118.628px" width="26" height="24" viewBox="0 0 26 24"><path d="M12 .5H24.5Q25.5 .5 25.5 1.5V9H12Z" fill="#ecd28a" stroke="#c9ae6e"/><rect x="14" y="2.5" width="6" height="3" fill="#fff"/><rect x="19.5" y="2.5" width="3.5" height="3" rx="1.5" fill="#5b9be0"/><path d="M.5 3Q.5 2 1.5 2H11L13.5 7.5H25.5V23.5H.5Z" fill="url(#fgrad)" stroke="#c6aa68"/><path d="M2 4.5V21.5" stroke="#fbf0c0" stroke-width="1.5"/><path d="M.5 22.5H25.5" stroke="#a98f55" stroke-width="2"/></svg>
<div class="t" style="top:1121px;font-size:23.653px;transform:scaleX(0.8989);left:351.80px;transform-origin:0 0;">RD Connection Broker</div>
<svg style="left:289.5px;top:1157.452px" width="11" height="18" viewBox="0 0 11 18"><path d="M1.5 1.5L9.5 9L1.5 16.5Z" fill="none" stroke="#3a3a3a" stroke-width="2" stroke-linejoin="miter"/></svg>
<svg style="left:312.0px;top:1151.452px" width="26" height="24" viewBox="0 0 26 24"><path d="M12 .5H24.5Q25.5 .5 25.5 1.5V9H12Z" fill="#ecd28a" stroke="#c9ae6e"/><rect x="14" y="2.5" width="6" height="3" fill="#fff"/><rect x="19.5" y="2.5" width="3.5" height="3" rx="1.5" fill="#5b9be0"/><path d="M.5 3Q.5 2 1.5 2H11L13.5 7.5H25.5V23.5H.5Z" fill="url(#fgrad)" stroke="#c6aa68"/><path d="M2 4.5V21.5" stroke="#fbf0c0" stroke-width="1.5"/><path d="M.5 22.5H25.5" stroke="#a98f55" stroke-width="2"/></svg>
<div class="t" style="top:1154px;font-size:23.653px;transform:scaleX(0.8955);left:351.80px;transform-origin:0 0;">Remote Session Environment</div>
<div style="left:309px;top:1181.4759999999999px;width:126.5px;height:32px;background:#f0f0f0;border:1.5px solid #dadada"></div>
<svg style="left:312.0px;top:1184.2759999999998px" width="26" height="24" viewBox="0 0 26 24"><path d="M12 .5H24.5Q25.5 .5 25.5 1.5V9H12Z" fill="#ecd28a" stroke="#c9ae6e"/><rect x="14" y="2.5" width="6" height="3" fill="#fff"/><rect x="19.5" y="2.5" width="3.5" height="3" rx="1.5" fill="#5b9be0"/><path d="M.5 3Q.5 2 1.5 2H11L13.5 7.5H25.5V23.5H.5Z" fill="url(#fgrad)" stroke="#c6aa68"/><path d="M2 4.5V21.5" stroke="#fbf0c0" stroke-width="1.5"/><path d="M.5 22.5H25.5" stroke="#a98f55" stroke-width="2"/></svg>
<div class="t" style="top:1187px;font-size:23.653px;transform:scaleX(0.8861);left:351.80px;transform-origin:0 0;">Security</div>
<svg style="left:312.0px;top:1217.1px" width="26" height="24" viewBox="0 0 26 24"><path d="M12 .5H24.5Q25.5 .5 25.5 1.5V9H12Z" fill="#ecd28a" stroke="#c9ae6e"/><rect x="14" y="2.5" width="6" height="3" fill="#fff"/><rect x="19.5" y="2.5" width="3.5" height="3" rx="1.5" fill="#5b9be0"/><path d="M.5 3Q.5 2 1.5 2H11L13.5 7.5H25.5V23.5H.5Z" fill="url(#fgrad)" stroke="#c6aa68"/><path d="M2 4.5V21.5" stroke="#fbf0c0" stroke-width="1.5"/><path d="M.5 22.5H25.5" stroke="#a98f55" stroke-width="2"/></svg>
<div class="t" style="top:1220px;font-size:23.653px;transform:scaleX(0.8984);left:351.80px;transform-origin:0 0;">Session Time Limits</div>
<svg style="left:312.0px;top:1249.924px" width="26" height="24" viewBox="0 0 26 24"><path d="M12 .5H24.5Q25.5 .5 25.5 1.5V9H12Z" fill="#ecd28a" stroke="#c9ae6e"/><rect x="14" y="2.5" width="6" height="3" fill="#fff"/><rect x="19.5" y="2.5" width="3.5" height="3" rx="1.5" fill="#5b9be0"/><path d="M.5 3Q.5 2 1.5 2H11L13.5 7.5H25.5V23.5H.5Z" fill="url(#fgrad)" stroke="#c6aa68"/><path d="M2 4.5V21.5" stroke="#fbf0c0" stroke-width="1.5"/><path d="M.5 22.5H25.5" stroke="#a98f55" stroke-width="2"/></svg>
<div class="t" style="top:1252px;font-size:23.653px;transform:scaleX(0.9282);left:351.80px;transform-origin:0 0;">Temporary folders</div>
<svg style="left:243.0px;top:1282.748px" width="26" height="24" viewBox="0 0 26 24"><path d="M12 .5H24.5Q25.5 .5 25.5 1.5V9H12Z" fill="#ecd28a" stroke="#c9ae6e"/><rect x="14" y="2.5" width="6" height="3" fill="#fff"/><rect x="19.5" y="2.5" width="3.5" height="3" rx="1.5" fill="#5b9be0"/><path d="M.5 3Q.5 2 1.5 2H11L13.5 7.5H25.5V23.5H.5Z" fill="url(#fgrad)" stroke="#c6aa68"/><path d="M2 4.5V21.5" stroke="#fbf0c0" stroke-width="1.5"/><path d="M.5 22.5H25.5" stroke="#a98f55" stroke-width="2"/></svg>
<div class="t" style="top:1285px;font-size:23.653px;transform:scaleX(0.7727);left:282.80px;transform-origin:0 0;">RSS Feeds</div>
<svg style="left:243.0px;top:1315.572px" width="26" height="24" viewBox="0 0 26 24"><path d="M12 .5H24.5Q25.5 .5 25.5 1.5V9H12Z" fill="#ecd28a" stroke="#c9ae6e"/><rect x="14" y="2.5" width="6" height="3" fill="#fff"/><rect x="19.5" y="2.5" width="3.5" height="3" rx="1.5" fill="#5b9be0"/><path d="M.5 3Q.5 2 1.5 2H11L13.5 7.5H25.5V23.5H.5Z" fill="url(#fgrad)" stroke="#c6aa68"/><path d="M2 4.5V21.5" stroke="#fbf0c0" stroke-width="1.5"/><path d="M.5 22.5H25.5" stroke="#a98f55" stroke-width="2"/></svg>
<div class="t" style="top:1318px;font-size:23.653px;transform:scaleX(0.8876);left:282.80px;transform-origin:0 0;">Security Center</div>
<svg style="left:243.0px;top:1348.396px" width="26" height="24" viewBox="0 0 26 24"><path d="M12 .5H24.5Q25.5 .5 25.5 1.5V9H12Z" fill="#ecd28a" stroke="#c9ae6e"/><rect x="14" y="2.5" width="6" height="3" fill="#fff"/><rect x="19.5" y="2.5" width="3.5" height="3" rx="1.5" fill="#5b9be0"/><path d="M.5 3Q.5 2 1.5 2H11L13.5 7.5H25.5V23.5H.5Z" fill="url(#fgrad)" stroke="#c6aa68"/><path d="M2 4.5V21.5" stroke="#fbf0c0" stroke-width="1.5"/><path d="M.5 22.5H25.5" stroke="#a98f55" stroke-width="2"/></svg>
<div class="t" style="top:1351px;font-size:23.653px;transform:scaleX(0.8572);left:282.80px;transform-origin:0 0;">Server for NIS</div>
<svg style="left:243.0px;top:1381.2199999999998px" width="26" height="24" viewBox="0 0 26 24"><path d="M12 .5H24.5Q25.5 .5 25.5 1.5V9H12Z" fill="#ecd28a" stroke="#c9ae6e"/><rect x="14" y="2.5" width="6" height="3" fill="#fff"/><rect x="19.5" y="2.5" width="3.5" height="3" rx="1.5" fill="#5b9be0"/><path d="M.5 3Q.5 2 1.5 2H11L13.5 7.5H25.5V23.5H.5Z" fill="url(#fgrad)" stroke="#c6aa68"/><path d="M2 4.5V21.5" stroke="#fbf0c0" stroke-width="1.5"/><path d="M.5 22.5H25.5" stroke="#a98f55" stroke-width="2"/></svg>
<div class="t" style="top:1384px;font-size:23.653px;transform:scaleX(0.9271);left:282.80px;transform-origin:0 0;">Shutdown Options</div>
<svg style="left:243.0px;top:1414.0439999999999px" width="26" height="24" viewBox="0 0 26 24"><path d="M12 .5H24.5Q25.5 .5 25.5 1.5V9H12Z" fill="#ecd28a" stroke="#c9ae6e"/><rect x="14" y="2.5" width="6" height="3" fill="#fff"/><rect x="19.5" y="2.5" width="3.5" height="3" rx="1.5" fill="#5b9be0"/><path d="M.5 3Q.5 2 1.5 2H11L13.5 7.5H25.5V23.5H.5Z" fill="url(#fgrad)" stroke="#c6aa68"/><path d="M2 4.5V21.5" stroke="#fbf0c0" stroke-width="1.5"/><path d="M.5 22.5H25.5" stroke="#a98f55" stroke-width="2"/></svg>
<div class="t" style="top:1417px;font-size:23.653px;transform:scaleX(0.8762);left:282.80px;transform-origin:0 0;">Smart Card</div>
<svg style="left:243.0px;top:1446.868px" width="26" height="24" viewBox="0 0 26 24"><path d="M12 .5H24.5Q25.5 .5 25.5 1.5V9H12Z" fill="#ecd28a" stroke="#c9ae6e"/><rect x="14" y="2.5" width="6" height="3" fill="#fff"/><rect x="19.5" y="2.5" width="3.5" height="3" rx="1.5" fill="#5b9be0"/><path d="M.5 3Q.5 2 1.5 2H11L13.5 7.5H25.5V23.5H.5Z" fill="url(#fgrad)" stroke="#c6aa68"/><path d="M2 4.5V21.5" stroke="#fbf0c0" stroke-width="1.5"/><path d="M.5 22.5H25.5" stroke="#a98f55" stroke-width="2"/></svg>
<div class="t" style="top:1449px;font-size:23.653px;transform:scaleX(0.8836);left:282.80px;transform-origin:0 0;">Sound Recorder</div>
<svg style="left:243.0px;top:1479.692px" width="26" height="24" viewBox="0 0 26 24"><path d="M12 .5H24.5Q25.5 .5 25.5 1.5V9H12Z" fill="#ecd28a" stroke="#c9ae6e"/><rect x="14" y="2.5" width="6" height="3" fill="#fff"/><rect x="19.5" y="2.5" width="3.5" height="3" rx="1.5" fill="#5b9be0"/><path d="M.5 3Q.5 2 1.5 2H11L13.5 7.5H25.5V23.5H.5Z" fill="url(#fgrad)" stroke="#c6aa68"/><path d="M2 4.5V21.5" stroke="#fbf0c0" stroke-width="1.5"/><path d="M.5 22.5H25.5" stroke="#a98f55" stroke-width="2"/></svg>
<div class="t" style="top:1482px;font-size:23.653px;transform:scaleX(0.8976);left:282.80px;transform-origin:0 0;">Sync your settings</div>
<div style="left:904.5px;top:393.5px;width:30.5px;height:1118px;background:#fff;border-left:1.6px solid #c4c4c4;border-right:1.6px solid #c4c4c4;border-top:1.6px solid #d4d4d4"></div>
<div style="left:904.5px;top:421.5px;width:30.5px;height:2px;background:#c4c4c4"></div>
<svg style="left:912.5px;top:405px" width="14" height="10" viewBox="0 0 14 10"><path d="M1 9L7.0 1L13 9" fill="none" stroke="#555" stroke-width="2.4"/></svg>
<div style="left:62px;top:1509px;width:874px;height:33px;background:#fff"></div>
<div style="left:65.5px;top:1510.5px;width:29px;height:29px;background:#fff;border:1.5px solid #dcdcdc"></div>
<svg style="left:75px;top:1517px" width="9" height="15" viewBox="0 0 9 15"><path d="M8 1L1 7.5L8 14" fill="none" stroke="#505050" stroke-width="1.6"/></svg>
<div style="left:96px;top:1510.7px;width:628.5px;height:29px;background:#dadada;border:1.5px solid #a9a9a9"></div>
<div style="left:402px;top:1519.5px;width:2.5px;height:12px;background:#555"></div>
<div style="left:407.5px;top:1519.5px;width:2.5px;height:12px;background:#555"></div>
<div style="left:413px;top:1519.5px;width:2.5px;height:12px;background:#555"></div>
<div style="left:724px;top:1510.7px;width:151px;height:29px;background:#fff;border-top:1.5px solid #cfcfcf;border-bottom:1.5px solid #cfcfcf"></div>
<div style="left:873.5px;top:1510.7px;width:30px;height:29px;background:#fff;border:1.5px solid #d0d0d0"></div>
<div style="left:939px;top:390px;width:7px;height:1157px;background:#f0f0f0"></div>
<div style="left:946px;top:390px;width:1797px;height:1120px;background:#fff;border-left:3px solid #767676;border-top:3px solid #767676;border-right:1.5px solid #cfcfcf"></div>
<div style="left:946px;top:1510px;width:1797px;height:2px;background:#6a6a6a"></div>
<div style="left:946px;top:1512px;width:1797px;height:33px;background:#f0f0f0"></div>
<div style="left:949px;top:393px;width:1792.5px;height:27.5px;background:#9db0cc"></div>
<div style="left:949px;top:420px;width:368px;height:18px;background:#9db0cc"></div>
<svg style="left:1316px;top:419px" width="16" height="19" viewBox="0 0 16 19"><path d="M0 0H16V1Q6 1 1 10V19H0Z" fill="#9db0cc"/></svg>
<svg style="left:966px;top:403px" width="26" height="24" viewBox="0 0 26 24"><path d="M12 .5H24.5Q25.5 .5 25.5 1.5V9H12Z" fill="#ecd28a" stroke="#c9ae6e"/><rect x="14" y="2.5" width="6" height="3" fill="#fff"/><rect x="19.5" y="2.5" width="3.5" height="3" rx="1.5" fill="#5b9be0"/><path d="M.5 3Q.5 2 1.5 2H11L13.5 7.5H25.5V23.5H.5Z" fill="url(#fgrad)" stroke="#c6aa68"/><path d="M2 4.5V21.5" stroke="#fbf0c0" stroke-width="1.5"/><path d="M.5 22.5H25.5" stroke="#a98f55" stroke-width="2"/></svg>
<div class="t" style="top:408px;font-size:28.101px;transform:scaleX(0.9212);left:1012.50px;transform-origin:0 0;">Security</div>
<div class="t" style="top:451px;font-size:21.900px;font-weight:bold;left:957.50px;transform-origin:0 0;">Server authentication certificate</div>
<div class="t" style="top:478px;font-size:21.900px;font-weight:bold;transform:scaleX(1.0272);left:957.50px;transform-origin:0 0;">template</div>
<div class="t" style="top:539px;font-size:23.653px;transform:scaleX(0.8895);left:957.50px;transform-origin:0 0;">Edit</div>
<div class="t" style="top:539px;font-size:23.653px;color:#2a6fc9;transform:scaleX(0.9416);left:1000.00px;transform-origin:0 0;">policy setting</div>
<div style="left:1000px;top:561px;width:129px;height:1.5px;background:#2a6fc9"></div>
<div style="left:1304.6px;top:507.8px;width:30px;height:80px;background:#f0f0f0"></div>
<svg style="left:1309px;top:539px" width="21" height="17" viewBox="0 0 21 17"><path d="M1 16L10.5 1L20 16" fill="none" stroke="#5a5a5a" stroke-width="3.4"/></svg>
<div style="left:1306px;top:570px;width:26.5px;height:20px;background:#cdcdcd"></div>
<div style="left:1335.8px;top:439px;width:1405.7px;height:33.5px;background:#fafafa;border-bottom:1.5px solid #e3e3e3;border-left:1.5px solid #e3e3e3"></div>
<div style="left:1335.8px;top:439px;width:1186.2px;height:1.5px;background:#e3e3e3"></div>
<div style="left:1973.5px;top:440px;width:1.5px;height:32px;background:#e3e3e3"></div>
<div style="left:2155.5px;top:440px;width:1.5px;height:32px;background:#e3e3e3"></div>
<div style="left:2520.5px;top:440px;width:1.5px;height:32px;background:#e3e3e3"></div>
<div class="t" style="top:447px;font-size:23.653px;transform:scaleX(0.9045);left:1346.00px;transform-origin:0 0;">Setting</div>
<div class="t" style="top:447px;font-size:23.653px;transform:scaleX(0.8691);left:2042.00px;transform-origin:0 0;">State</div>
<div class="t" style="top:447px;font-size:23.653px;transform:scaleX(0.9509);left:2291.00px;transform-origin:0 0;">Comment</div>
<div style="left:1372px;top:473.3px;width:1149px;height:33.7px;background:#f0f0f0"></div>
<svg style="left:1344px;top:476.3px" width="24" height="27" viewBox="0 0 24 27"><path d="M.8 .8H17L23.2 7V26.2H.8Z" fill="#d3e3f8" stroke="#7389a8" stroke-width="1.5"/><path d="M17 .8V7H23.2" fill="#fff" stroke="#7389a8" stroke-width="1"/><path d="M18 0L23.5 5.5" stroke="#e8e050" stroke-width="1.5"/><rect x="5" y="8" width="3" height="3" fill="#111"/><rect x="5" y="18" width="3" height="3" fill="#111"/><path d="M5.5 15.5L7.5 13" stroke="#8c86b8" stroke-width="1"/><path d="M10 9.5H18M10 14.5H18M10 19.5H18" stroke="#7a74a8" stroke-width="1.6"/></svg>
<div class="t" style="top:480px;font-size:23.653px;transform:scaleX(0.9222);left:1376.50px;transform-origin:0 0;">Server authentication certificate template</div>
<div class="t" style="top:480px;font-size:23.653px;transform:scaleX(0.8686);left:2028.00px;transform-origin:0 0;">Enabled</div>
<div class="t" style="top:480px;font-size:23.653px;transform:scaleX(0.9097);left:2326.00px;transform-origin:0 0;">No</div>
<svg style="left:1344px;top:510.88000000000005px" width="24" height="27" viewBox="0 0 24 27"><path d="M.8 .8H17L23.2 7V26.2H.8Z" fill="#fff" stroke="#6f6f6f" stroke-width="1.5"/><path d="M17 .8V7H23.2" fill="#fff" stroke="#6f6f6f" stroke-width="1"/><rect x="5" y="8" width="3" height="3" fill="#111"/><rect x="5" y="18" width="3" height="3" fill="#111"/><path d="M5.5 15.5L7.5 13" stroke="#8c86b8" stroke-width="1"/><path d="M10 9.5H18M10 14.5H18M10 19.5H18" stroke="#7a74a8" stroke-width="1.6"/></svg>
<div class="t" style="top:515px;font-size:23.653px;transform:scaleX(0.9256);left:1376.50px;transform-origin:0 0;">Set client connection encryption level</div>
<div class="t" style="top:515px;font-size:23.653px;transform:scaleX(0.9497);left:1991.30px;transform-origin:0 0;">Not configured</div>
<div class="t" style="top:515px;font-size:23.653px;transform:scaleX(0.9097);left:2326.00px;transform-origin:0 0;">No</div>
<svg style="left:1344px;top:545.4599999999999px" width="24" height="27" viewBox="0 0 24 27"><path d="M.8 .8H17L23.2 7V26.2H.8Z" fill="#fff" stroke="#6f6f6f" stroke-width="1.5"/><path d="M17 .8V7H23.2" fill="#fff" stroke="#6f6f6f" stroke-width="1"/><rect x="5" y="8" width="3" height="3" fill="#111"/><rect x="5" y="18" width="3" height="3" fill="#111"/><path d="M5.5 15.5L7.5 13" stroke="#8c86b8" stroke-width="1"/><path d="M10 9.5H18M10 14.5H18M10 19.5H18" stroke="#7a74a8" stroke-width="1.6"/></svg>
<div class="t" style="top:550px;font-size:23.653px;transform:scaleX(0.9330);left:1376.50px;transform-origin:0 0;">Always prompt for password upon connection</div>
<div class="t" style="top:550px;font-size:23.653px;transform:scaleX(0.9497);left:1991.30px;transform-origin:0 0;">Not configured</div>
<div class="t" style="top:550px;font-size:23.653px;transform:scaleX(0.9097);left:2326.00px;transform-origin:0 0;">No</div>
<svg style="left:1344px;top:580.04px" width="24" height="27" viewBox="0 0 24 27"><path d="M.8 .8H17L23.2 7V26.2H.8Z" fill="#fff" stroke="#6f6f6f" stroke-width="1.5"/><path d="M17 .8V7H23.2" fill="#fff" stroke="#6f6f6f" stroke-width="1"/><rect x="5" y="8" width="3" height="3" fill="#111"/><rect x="5" y="18" width="3" height="3" fill="#111"/><path d="M5.5 15.5L7.5 13" stroke="#8c86b8" stroke-width="1"/><path d="M10 9.5H18M10 14.5H18M10 19.5H18" stroke="#7a74a8" stroke-width="1.6"/></svg>
<div class="t" style="top:584px;font-size:23.653px;transform:scaleX(0.9497);left:1991.30px;transform-origin:0 0;">Not configured</div>
<div class="t" style="top:584px;font-size:23.653px;transform:scaleX(0.9097);left:2326.00px;transform-origin:0 0;">No</div>
<div class="t" style="top:619px;font-size:23.653px;transform:scaleX(0.9497);left:1991.30px;transform-origin:0 0;">Not configured</div>
<div class="t" style="top:619px;font-size:23.653px;transform:scaleX(0.9097);left:2326.00px;transform-origin:0 0;">No</div>
<div class="t" style="top:653px;font-size:23.653px;transform:scaleX(0.9497);left:1991.30px;transform-origin:0 0;">Not configured</div>
<div class="t" style="top:653px;font-size:23.653px;transform:scaleX(0.9097);left:2326.00px;transform-origin:0 0;">No</div>
<div class="t" style="top:688px;font-size:23.653px;transform:scaleX(0.9497);left:1991.30px;transform-origin:0 0;">Not configured</div>
<div class="t" style="top:688px;font-size:23.653px;transform:scaleX(0.9097);left:2326.00px;transform-origin:0 0;">No</div>
<div style="left:60px;top:1545px;width:2683px;height:41px;background:#fff;border-top:1.5px solid #a0a0a0;border-bottom:1.5px solid #a8a8a8;border-right:1.5px solid #c0c0c0"></div>
<div style="left:2342px;top:1548px;width:1px;height:36px;background:#d6d6d6"></div>
<div style="left:2585px;top:1548px;width:1px;height:36px;background:#d6d6d6"></div>
<div style="left:2740px;top:1548px;width:1px;height:36px;background:#d6d6d6"></div>
<div style="left:46px;top:1599px;width:2746px;height:2px;background:#5f6a72"></div>
<div style="left:884px;top:582px;width:1279px;height:1100px;background:#7ec8e6;border:2px solid #353535"></div>
<div style="left:898.5px;top:637.5px;width:1249.5px;height:1100px;background:#f0f0f0;border-top:1.5px solid #74a9c2"></div>
<svg style="left:901px;top:596px" width="32" height="30" viewBox="0 0 32 30"><rect x="8" y="1.5" width="22" height="17" rx="1" fill="#e6e0d0" stroke="#c8c0b0"/><rect x="10" y="3.5" width="18" height="13" fill="#1a1ad8"/><path d="M18 4H27V15H20Z" fill="#aab0f0" opacity=".8"/><path d="M17 19H25L27 23H15Z" fill="#cfc8b8"/><ellipse cx="8" cy="12" rx="4.2" ry="5.5" fill="#c98d55"/><path d="M3.8 10Q4 5.5 8 5.5Q12 5.5 12.2 10Q10 7.5 8 8Q6 7.5 3.8 10Z" fill="#333"/><path d="M1 27Q1 19 8 18.5Q15 19 15 27Z" fill="#8fb6e6" stroke="#6a94c8" stroke-width=".8"/></svg>
<div class="t" style="top:596px;font-size:29.620px;transform:scaleX(0.9297);left:1274.00px;transform-origin:0 0;">Server authentication certificate template</div>
<div style="left:1967px;top:581px;width:185px;height:41.5px;border:1.8px solid #38464e;border-top:none"></div>
<div style="left:2018.3px;top:582px;width:1.8px;height:40px;background:#38464e"></div>
<div style="left:2065.5px;top:584px;width:85.5px;height:37px;background:#b95e52;border-left:1.5px solid #38464e"></div>
<div style="left:1983.6px;top:604.5px;width:18px;height:5.5px;background:#3f6478"></div>
<div style="left:2035px;top:595.5px;width:18px;height:14.5px;border:3.6px solid #000"></div>
<svg style="left:2099.5px;top:594.5px" width="18" height="16" viewBox="0 0 18 16"><path d="M2 1.5L16 14.5M16 1.5L2 14.5" stroke="#000" stroke-width="4"/></svg>
<svg style="left:909px;top:664px" width="30" height="30" viewBox="0 0 30 30"><rect x=".5" y=".5" width="29" height="29" fill="#4a4a4a"/><rect x="2" y="1" width="26" height="5" fill="#8d8cc8"/><rect x="4" y="6" width="22" height="4" fill="#fff"/><rect x="4" y="8" width="16" height="2" fill="#4a8a4a"/><rect x="19" y="7" width="7" height="3" fill="#f2c230"/><rect x="0" y="0" width="3" height="30" fill="#2a7a7a"/><rect x="27" y="0" width="3" height="30" fill="#2a7a7a"/><circle cx="10" cy="20" r="7.5" fill="#eef4ee"/><circle cx="10" cy="20" r="1.8" fill="#333"/><path d="M4 15L8 19" stroke="#f0b8d8" stroke-width="2"/><path d="M13 24L16 27" stroke="#b8f0b8" stroke-width="2"/><rect x="18.5" y="12" width="8" height="15" fill="#f6e8b0"/><path d="M20 16H25M20 19.5H25" stroke="#7a7ab0" stroke-width="1.6"/></svg>
<div class="t" style="top:664px;font-size:23.653px;transform:scaleX(0.9181);left:954.00px;transform-origin:0 0;">Server authentication certificate template</div>
<div style="left:1584px;top:667px;width:183.5px;height:46px;background:#f4f4f4;border:1.5px solid #bfbfbf"></div>
<div class="t" style="top:678px;font-size:23.653px;color:#a3a3a3;transform:scaleX(0.8912);left:1599.00px;transform-origin:0 0;">Previous Setting</div>
<div style="left:1783px;top:667px;width:184px;height:46px;background:#e1e1e1;border:1.5px solid #707070"></div>
<div class="t" style="top:678px;font-size:23.653px;transform:scaleX(0.9120);left:1816.00px;transform-origin:0 0;">Next Setting</div>
<svg style="left:914px;top:749.25px" width="24" height="24" viewBox="0 0 24 24"><circle cx="12" cy="12" r="10.5" fill="#fff" stroke="#7a7a7a" stroke-width="1.6"/></svg>
<svg style="left:914px;top:800.5px" width="24" height="24" viewBox="0 0 24 24"><circle cx="12" cy="12" r="10.5" fill="#fff" stroke="#7a7a7a" stroke-width="1.6"/><circle cx="12" cy="12" r="5.3" fill="#1e1e1e"/></svg>
<svg style="left:914px;top:851.5px" width="24" height="24" viewBox="0 0 24 24"><circle cx="12" cy="12" r="10.5" fill="#fff" stroke="#7a7a7a" stroke-width="1.6"/></svg>
<div class="t" style="top:753px;font-size:23.653px;transform:scaleX(0.9287);left:947.50px;transform-origin:0 0;">Not Configured</div>
<div class="t" style="top:804px;font-size:23.653px;transform:scaleX(0.8525);left:947.50px;transform-origin:0 0;">Enabled</div>
<div class="t" style="top:855px;font-size:23.653px;transform:scaleX(0.8720);left:947.50px;transform-origin:0 0;">Disabled</div>
<div class="t" style="top:744px;font-size:23.653px;transform:scaleX(0.8901);left:1138.00px;transform-origin:0 0;">Comment:</div>
<div class="t" style="top:886px;font-size:23.653px;transform:scaleX(0.9118);left:1138.50px;transform-origin:0 0;">Supported on:</div>
<div style="left:1295px;top:744px;width:836.5px;height:130.5px;background:#fff;border:1.8px solid #6e6e6e"></div>
<div style="left:2097px;top:747.5px;width:30.5px;height:123.0px;background:#fff;border-left:1px solid #e0e0e0"></div>
<div style="left:2097px;top:747.5px;width:30.5px;height:29.5px;background:#fff;border:1.5px solid #d4d4d4"></div>
<div style="left:2097px;top:841.0px;width:30.5px;height:29.5px;background:#fff;border:1.5px solid #d4d4d4"></div>
<svg style="left:2105px;top:757.5px" width="15" height="9" viewBox="0 0 15 9"><path d="M1 8L7.5 1L14 8" fill="none" stroke="#606060" stroke-width="1.6"/></svg>
<svg style="left:2105px;top:851.0px" width="15" height="9" viewBox="0 0 15 9"><path d="M1 1L7.5 8L14 1" fill="none" stroke="#606060" stroke-width="1.6"/></svg>
<div style="left:1295px;top:886px;width:836.5px;height:83.5px;background:#f0f0f0;border:1.8px solid #4a9de0"></div>
<div style="left:2097px;top:890px;width:30.5px;height:75.5px;background:#fff;border:1.5px solid #d4d4d4"></div>
<div style="left:2097px;top:890px;width:30.5px;height:29.5px;background:#fff;border:1.5px solid #d4d4d4"></div>
<div style="left:2097px;top:936px;width:30.5px;height:29.5px;background:#fff;border:1.5px solid #d4d4d4"></div>
<svg style="left:2105px;top:900px" width="15" height="9" viewBox="0 0 15 9"><path d="M1 8L7.5 1L14 8" fill="none" stroke="#606060" stroke-width="1.6"/></svg>
<svg style="left:2105px;top:946px" width="15" height="9" viewBox="0 0 15 9"><path d="M1 1L7.5 8L14 1" fill="none" stroke="#606060" stroke-width="1.6"/></svg>
<div class="t" style="top:895px;font-size:23.653px;transform:scaleX(0.9007);left:1306.20px;transform-origin:0 0;">At least Windows Vista</div>
<div class="t" style="top:997px;font-size:23.653px;transform:scaleX(0.9139);left:908.50px;transform-origin:0 0;">Options:</div>
<div class="t" style="top:997px;font-size:23.653px;transform:scaleX(0.8785);left:1467.90px;transform-origin:0 0;">Help:</div>
<div style="left:904.5px;top:1059.5px;width:544.5px;height:588.5px;background:#fff;border:1.8px solid #6e6e6e"></div>
<div class="t" style="top:1075px;font-size:23.653px;transform:scaleX(0.9021);left:916.00px;transform-origin:0 0;">Certificate Template Name</div>
<div style="left:912px;top:1114px;width:401.5px;height:41.5px;background:#fff;border:1.8px solid #3a6ea8"></div>
<div class="t" style="top:1122px;font-size:23.653px;transform:scaleX(0.8787);left:918.50px;transform-origin:0 0;">RemoteDesktopAccess</div>
<div style="left:1136.5px;top:1119.5px;width:2px;height:27px;background:#000"></div>
<div style="left:1463.5px;top:1059.5px;width:676px;height:588.5px;background:#fff;border:1.8px solid #6e6e6e;border-right:none"></div>
<div style="left:2107px;top:1059.5px;width:32px;height:588.5px;background:#f0f0f0;border-left:1.8px solid #6e6e6e;border-bottom:1.8px solid #6e6e6e"></div>
<div style="left:2109px;top:1060px;width:29.5px;height:29.5px;background:#fff;border:1.5px solid #d8d8d8"></div>
<svg style="left:2116px;top:1069px" width="15" height="9" viewBox="0 0 15 9"><path d="M1 8L7.5 1L14 8" fill="none" stroke="#606060" stroke-width="1.6"/></svg>
<div style="left:2109px;top:1092px;width:29.5px;height:343px;background:#dadada;border:1.5px solid #c4c4c4"></div>
<div style="left:2116px;top:1257px;width:14px;height:2.2px;background:#555"></div>
<div style="left:2116px;top:1262px;width:14px;height:2.2px;background:#555"></div>
<div style="left:2116px;top:1267px;width:14px;height:2.2px;background:#555"></div>
<div style="left:2109px;top:1618px;width:29.5px;height:40px;background:#fff;border:1.5px solid #d8d8d8"></div>
<svg style="left:2116px;top:1628px" width="15" height="9" viewBox="0 0 15 9"><path d="M1 1L7.5 8L14 1" fill="none" stroke="#606060" stroke-width="1.6"/></svg>
<div class="t" style="top:1066px;font-size:23.653px;transform:scaleX(0.9253);left:1473.50px;transform-origin:0 0;">This policy setting allows you to specify the name of the</div>
<div class="t" style="top:1093px;font-size:23.653px;transform:scaleX(0.9280);left:1473.50px;transform-origin:0 0;">certificate template that determines which certificate is</div>
<div class="t" style="top:1121px;font-size:23.653px;transform:scaleX(0.9002);left:1473.50px;transform-origin:0 0;">automatically selected to authenticate an RD Session Host server.</div>
<div class="t" style="top:1175px;font-size:23.653px;transform:scaleX(0.8969);left:1473.50px;transform-origin:0 0;">A certificate is needed to authenticate an RD Session Host server</div>
<div class="t" style="top:1203px;font-size:23.653px;transform:scaleX(0.8922);left:1473.54px;transform-origin:0 0;">when SSL (TLS 1.0) is used to secure communication between a</div>
<div class="t" style="top:1230px;font-size:23.653px;transform:scaleX(0.8923);left:1473.50px;transform-origin:0 0;">client and an RD Session Host server during RDP connections.</div>
<div class="t" style="top:1285px;font-size:23.653px;transform:scaleX(0.9208);left:1473.50px;transform-origin:0 0;">If you enable this policy setting, you need to specify a certificate</div>
<div class="t" style="top:1312px;font-size:23.653px;transform:scaleX(0.9150);left:1473.50px;transform-origin:0 0;">template name. Only certificates created by using the specified</div>
<div class="t" style="top:1340px;font-size:23.653px;transform:scaleX(0.9236);left:1473.50px;transform-origin:0 0;">certificate template will be considered when a certificate to</div>
<div class="t" style="top:1367px;font-size:23.653px;transform:scaleX(0.8955);left:1473.50px;transform-origin:0 0;">authenticate the RD Session Host server is automatically selected.</div>
<div class="t" style="top:1394px;font-size:23.653px;transform:scaleX(0.9255);left:1473.50px;transform-origin:0 0;">Automatic certificate selection only occurs when a specific</div>
<div class="t" style="top:1422px;font-size:23.653px;transform:scaleX(0.9034);left:1473.50px;transform-origin:0 0;">certificate has not been selected.</div>
<div class="t" style="top:1476px;font-size:23.653px;transform:scaleX(0.9212);left:1473.50px;transform-origin:0 0;">If no certificate can be found that was created with the specified</div>
<div class="t" style="top:1504px;font-size:23.653px;transform:scaleX(0.8909);left:1473.50px;transform-origin:0 0;">certificate template, the RD Session Host server will issue a</div>
<div class="t" style="top:1531px;font-size:23.653px;transform:scaleX(0.9247);left:1473.50px;transform-origin:0 0;">certificate enrollment request and will use the current certificate</div>
<div class="t" style="top:1558px;font-size:23.653px;transform:scaleX(0.9243);left:1473.50px;transform-origin:0 0;">until the request is completed. If more than one certificate is</div>
<div class="t" style="top:1586px;font-size:23.653px;transform:scaleX(0.9241);left:1473.50px;transform-origin:0 0;">found that was created with the specified certificate template,</div>
<div class="t" style="top:1613px;font-size:23.653px;transform:scaleX(0.9220);left:1473.50px;transform-origin:0 0;">the certificate that will expire latest and that matches the current</div>
</body></html>
